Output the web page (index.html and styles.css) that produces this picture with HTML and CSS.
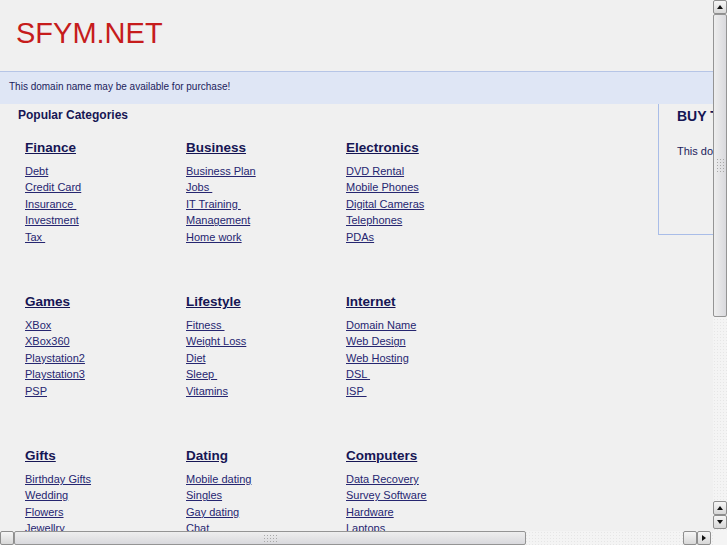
FILE: index.html
```html
<!DOCTYPE html>
<html lang="en">
<head>
    <meta charset="UTF-8">
    <title>SFYM.NET</title>
    <link rel="stylesheet" href="styles.css">
</head>
<body>
    <div class="window">
        <div class="viewport">
            <div class="page">
                <div class="header">
                    <h1 class="logo">SFYM.NET</h1>
                </div>
                <div class="notice">This domain name may be available for purchase!</div>

                <div class="main">
                    <div class="left">
                        <h2 class="section-title">Popular Categories</h2>
                        <div class="cat-grid">
                            <div class="cat">
                                <h3><a href="#">Finance</a></h3>
                                <ul>
                                    <li><a href="#">Debt</a></li>
                                    <li><a href="#">Credit Card</a></li>
                                    <li><a href="#">Insurance </a></li>
                                    <li><a href="#">Investment</a></li>
                                    <li><a href="#">Tax </a></li>
                                </ul>
                            </div>
                            <div class="cat">
                                <h3><a href="#">Business</a></h3>
                                <ul>
                                    <li><a href="#">Business Plan</a></li>
                                    <li><a href="#">Jobs </a></li>
                                    <li><a href="#">IT Training </a></li>
                                    <li><a href="#">Management</a></li>
                                    <li><a href="#">Home work</a></li>
                                </ul>
                            </div>
                            <div class="cat">
                                <h3><a href="#">Electronics</a></h3>
                                <ul>
                                    <li><a href="#">DVD Rental</a></li>
                                    <li><a href="#">Mobile Phones</a></li>
                                    <li><a href="#">Digital Cameras</a></li>
                                    <li><a href="#">Telephones</a></li>
                                    <li><a href="#">PDAs</a></li>
                                </ul>
                            </div>

                            <div class="cat">
                                <h3><a href="#">Games</a></h3>
                                <ul>
                                    <li><a href="#">XBox</a></li>
                                    <li><a href="#">XBox360</a></li>
                                    <li><a href="#">Playstation2</a></li>
                                    <li><a href="#">Playstation3</a></li>
                                    <li><a href="#">PSP</a></li>
                                </ul>
                            </div>
                            <div class="cat">
                                <h3><a href="#">Lifestyle</a></h3>
                                <ul>
                                    <li><a href="#">Fitness </a></li>
                                    <li><a href="#">Weight Loss</a></li>
                                    <li><a href="#">Diet</a></li>
                                    <li><a href="#">Sleep </a></li>
                                    <li><a href="#">Vitamins</a></li>
                                </ul>
                            </div>
                            <div class="cat">
                                <h3><a href="#">Internet</a></h3>
                                <ul>
                                    <li><a href="#">Domain Name</a></li>
                                    <li><a href="#">Web Design</a></li>
                                    <li><a href="#">Web Hosting</a></li>
                                    <li><a href="#">DSL </a></li>
                                    <li><a href="#">ISP </a></li>
                                </ul>
                            </div>

                            <div class="cat">
                                <h3><a href="#">Gifts</a></h3>
                                <ul>
                                    <li><a href="#">Birthday Gifts</a></li>
                                    <li><a href="#">Wedding</a></li>
                                    <li><a href="#">Flowers</a></li>
                                    <li><a href="#">Jewellry</a></li>
                                    <li><a href="#">Gift Ideas</a></li>
                                </ul>
                            </div>
                            <div class="cat">
                                <h3><a href="#">Dating</a></h3>
                                <ul>
                                    <li><a href="#">Mobile dating</a></li>
                                    <li><a href="#">Singles</a></li>
                                    <li><a href="#">Gay dating</a></li>
                                    <li><a href="#">Chat</a></li>
                                    <li><a href="#">Romance</a></li>
                                </ul>
                            </div>
                            <div class="cat">
                                <h3><a href="#">Computers</a></h3>
                                <ul>
                                    <li><a href="#">Data Recovery</a></li>
                                    <li><a href="#">Survey Software</a></li>
                                    <li><a href="#">Hardware</a></li>
                                    <li><a href="#">Laptops</a></li>
                                    <li><a href="#">Software</a></li>
                                </ul>
                            </div>
                        </div>
                    </div>

                    <div class="buy-box">
                        <h2 class="buy-title">BUY THIS DOMAIN</h2>
                        <p class="buy-text">This domain name may be for sale. Contact us for details.</p>
                    </div>
                </div>
            </div>
        </div>

        <!-- vertical scrollbar -->
        <div class="vbar">
            <div class="sb-btn"><span class="arrow up"></span></div>
            <div class="thumb vthumb"><span class="grip"></span></div>
            <div class="trough"></div>
            <div class="sb-btn"><span class="arrow up"></span></div>
            <div class="sb-btn"><span class="arrow down"></span></div>
        </div>

        <!-- horizontal scrollbar -->
        <div class="hbar">
            <div class="sb-btn"><span class="arrow left"></span></div>
            <div class="thumb hthumb"><span class="grip"></span></div>
            <div class="trough"></div>
            <div class="sb-btn"><span class="arrow left"></span></div>
            <div class="sb-btn"><span class="arrow right"></span></div>
        </div>

        <div class="corner"></div>
    </div>
</body>
</html>
```

FILE: styles.css
```css
/* Global */
body {
    margin: 0;
    padding: 0;
    overflow: hidden;
    font-family: 'Liberation Sans', Arial, sans-serif;
    background-color: #f0f0f0;
    color: #1c1c5c;
}

/* Browser frame with fake scrollbars */
.window {
    display: grid;
    grid-template-columns: 713px 14px;
    grid-template-rows: 531px 14px;
    width: 727px;
    height: 545px;
}

.viewport {
    overflow: hidden;
    background-color: #f0f0f0;
}

.page {
    width: 1000px;
}

/* Header */
.header {
    height: 71px;
    border-bottom: 1px solid #b6c5e6;
}

.logo {
    margin: 0;
    padding: 15px 0 0 16px;
    font-size: 29px;
    line-height: 36px;
    font-weight: normal;
    color: #c61c1c;
}

.notice {
    height: 32px;
    line-height: 30px;
    padding-left: 9px;
    font-size: 10px;
    background-color: #dfe6f5;
    color: #1c1c5c;
}

/* Main area */
.main {
    display: flex;
    align-items: flex-start;
}

.left {
    flex: none;
    width: 640px;
    padding-left: 18px;
}

.section-title {
    margin: 0;
    padding-top: 4px;
    font-size: 12px;
    line-height: 14px;
    color: #161654;
}

.cat-grid {
    display: grid;
    grid-template-columns: 161px 160px 161px;
    margin-top: 18px;
    padding-left: 7px;
}

.cat {
    height: 154px;
}

.cat h3 {
    margin: 0;
    font-size: 13.5px;
    line-height: 16px;
}

.cat h3 a {
    color: #161654;
}

.cat ul {
    list-style: none;
    margin: 7px 0 0 0;
    padding: 0;
}

.cat li {
    font-size: 11px;
    line-height: 16.4px;
    white-space: pre;
}

.cat li a {
    color: #262670;
}

/* Buy box */
.buy-box {
    flex: none;
    width: 220px;
    height: 130px;
    border: 1px solid #a9bde8;
    border-top: none;
    padding: 0 18px;
}

.buy-title {
    margin: 0;
    padding-top: 4px;
    font-size: 14px;
    line-height: 16px;
    color: #161654;
}

.buy-text {
    margin: 20px 0 0 0;
    font-size: 11px;
    line-height: 14px;
    white-space: nowrap;
}

/* Scrollbars */
.vbar, .hbar {
    display: flex;
    background-color: #f4f4f4;
    background-image: radial-gradient(#e6e6e6 0.6px, transparent 0.8px);
    background-size: 3px 3px;
}

.vbar {
    flex-direction: column;
    padding-bottom: 2px;
}

.hbar {
    flex-direction: row;
    padding-right: 2px;
}

.corner {
    background-color: #f4f4f4;
}

.trough {
    flex: 1;
}

.sb-btn {
    display: flex;
    align-items: center;
    justify-content: center;
    width: 14px;
    height: 14px;
    box-sizing: border-box;
    border: 1px solid #8e8e8e;
    border-radius: 2px;
    background: linear-gradient(#f6f6f6, #d8d8d8);
}

.arrow {
    width: 0;
    height: 0;
    border-style: solid;
    border-color: transparent;
}

.arrow.up {
    border-width: 0 3px 4px 3px;
    border-bottom-color: #111;
}

.arrow.down {
    border-width: 4px 3px 0 3px;
    border-top-color: #111;
}

.arrow.left {
    border-width: 3px 4px 3px 0;
    border-right-color: #111;
}

.arrow.right {
    border-width: 3px 0 3px 4px;
    border-left-color: #111;
}

.thumb {
    display: flex;
    align-items: center;
    justify-content: center;
    box-sizing: border-box;
    border: 1px solid #949494;
    border-radius: 2px;
}

.vthumb {
    height: 303px;
    background: linear-gradient(to right, #eeeeee, #d9d9dd);
}

.hthumb {
    width: 512px;
    background: linear-gradient(#eeeeee, #d9d9dd);
}

.grip {
    width: 9px;
    height: 9px;
    background-image: radial-gradient(#a8a8a8 0.6px, transparent 0.9px);
    background-size: 3px 3px;
}

.vthumb .grip {
    width: 9px;
    height: 15px;
}

.hthumb .grip {
    width: 15px;
    height: 9px;
}
```
